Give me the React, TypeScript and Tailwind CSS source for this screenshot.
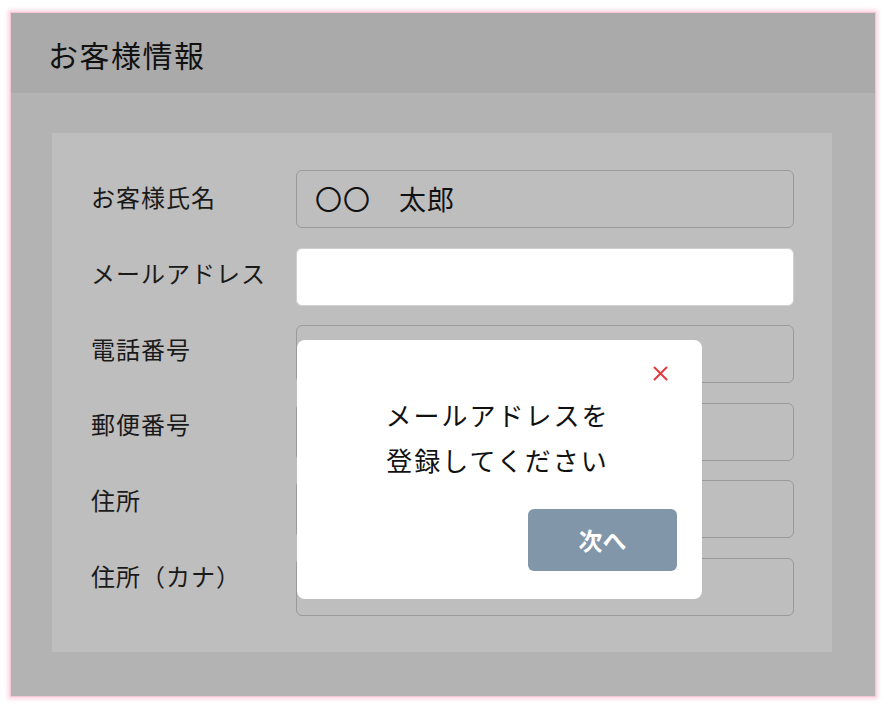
import React from 'react';

const fields = [
  { label: 'お客様氏名', value: '〇〇　太郎' },
  { label: 'メールアドレス', value: '', active: true },
  { label: '電話番号', value: '' },
  { label: '郵便番号', value: '' },
  { label: '住所', value: '' },
  { label: '住所（カナ）', value: '' },
];

const App: React.FC = () => {
  return (
    <div
      className="w-[884px] h-[708px] bg-white pt-[12px] pl-[10px]"
      style={{ fontFamily: '"Noto Sans CJK JP", "Noto Sans", sans-serif' }}
    >
      <div className="relative w-[866px] h-[685px] bg-[#b3b3b3] border border-[#f7c6d6] shadow-[0_0_4px_2px_#fbd3e0] flex flex-col">
        <div className="h-[80px] bg-[#aaaaaa] flex items-center pl-[37px] pt-[3px] shrink-0">
          <h1 className="text-[30px] text-[#111] tracking-[1.5px]">お客様情報</h1>
        </div>

        <div className="pl-[41px] pr-[43px] pt-[40px]">
          <div className="bg-[#bebebe] h-[519px] pl-[39px] pr-[38px] pt-[37px] flex">
            <div className="w-[205px] shrink-0 flex flex-col gap-[17.8px] -mt-[2px]">
              {fields.map((f) => (
                <span
                  key={f.label}
                  className="h-[58px] flex items-center text-[24px] text-[#1a1a1a] tracking-[1px]"
                >
                  {f.label}
                </span>
              ))}
            </div>
            <div className="flex-1 flex flex-col gap-[19.5px]">
              {fields.map((f) => (
                <div
                  key={f.label}
                  className={`h-[58px] rounded-[6px] border flex items-center pl-[18px] text-[27px] text-[#111] tracking-[1px] ${
                    f.active ? 'bg-white border-[#d0d0d0]' : 'bg-[#bebebe] border-[#9a9a9a]'
                  }`}
                >
                  {f.value}
                </div>
              ))}
            </div>
          </div>
        </div>

        {/* dialog */}
        <div className="absolute left-[286px] top-[327px] w-[405px] h-[259px] bg-white rounded-[8px] flex flex-col">
          <div className="flex justify-end pt-[25px] pr-[33px] h-[60px]">
            <svg width="17" height="17" viewBox="0 0 17 17">
              <path d="M2.5 2.5 L14.5 14.5 M14.5 2.5 L2.5 14.5" stroke="#e53940" strokeWidth="2" strokeLinecap="round" />
            </svg>
          </div>
          <p className="text-center text-[26px] leading-[45px] text-[#111] tracking-[2px] -mt-[8px] pr-[4px]">
            メールアドレスを
            <br />
            登録してください
          </p>
          <div className="flex justify-end pr-[25px] mt-auto pb-[28px]">
            <button className="w-[149px] h-[62px] rounded-[6px] bg-[#8296aa] text-white text-[24px] font-bold">
              次へ
            </button>
          </div>
        </div>
      </div>
    </div>
  );
};

export default App;
